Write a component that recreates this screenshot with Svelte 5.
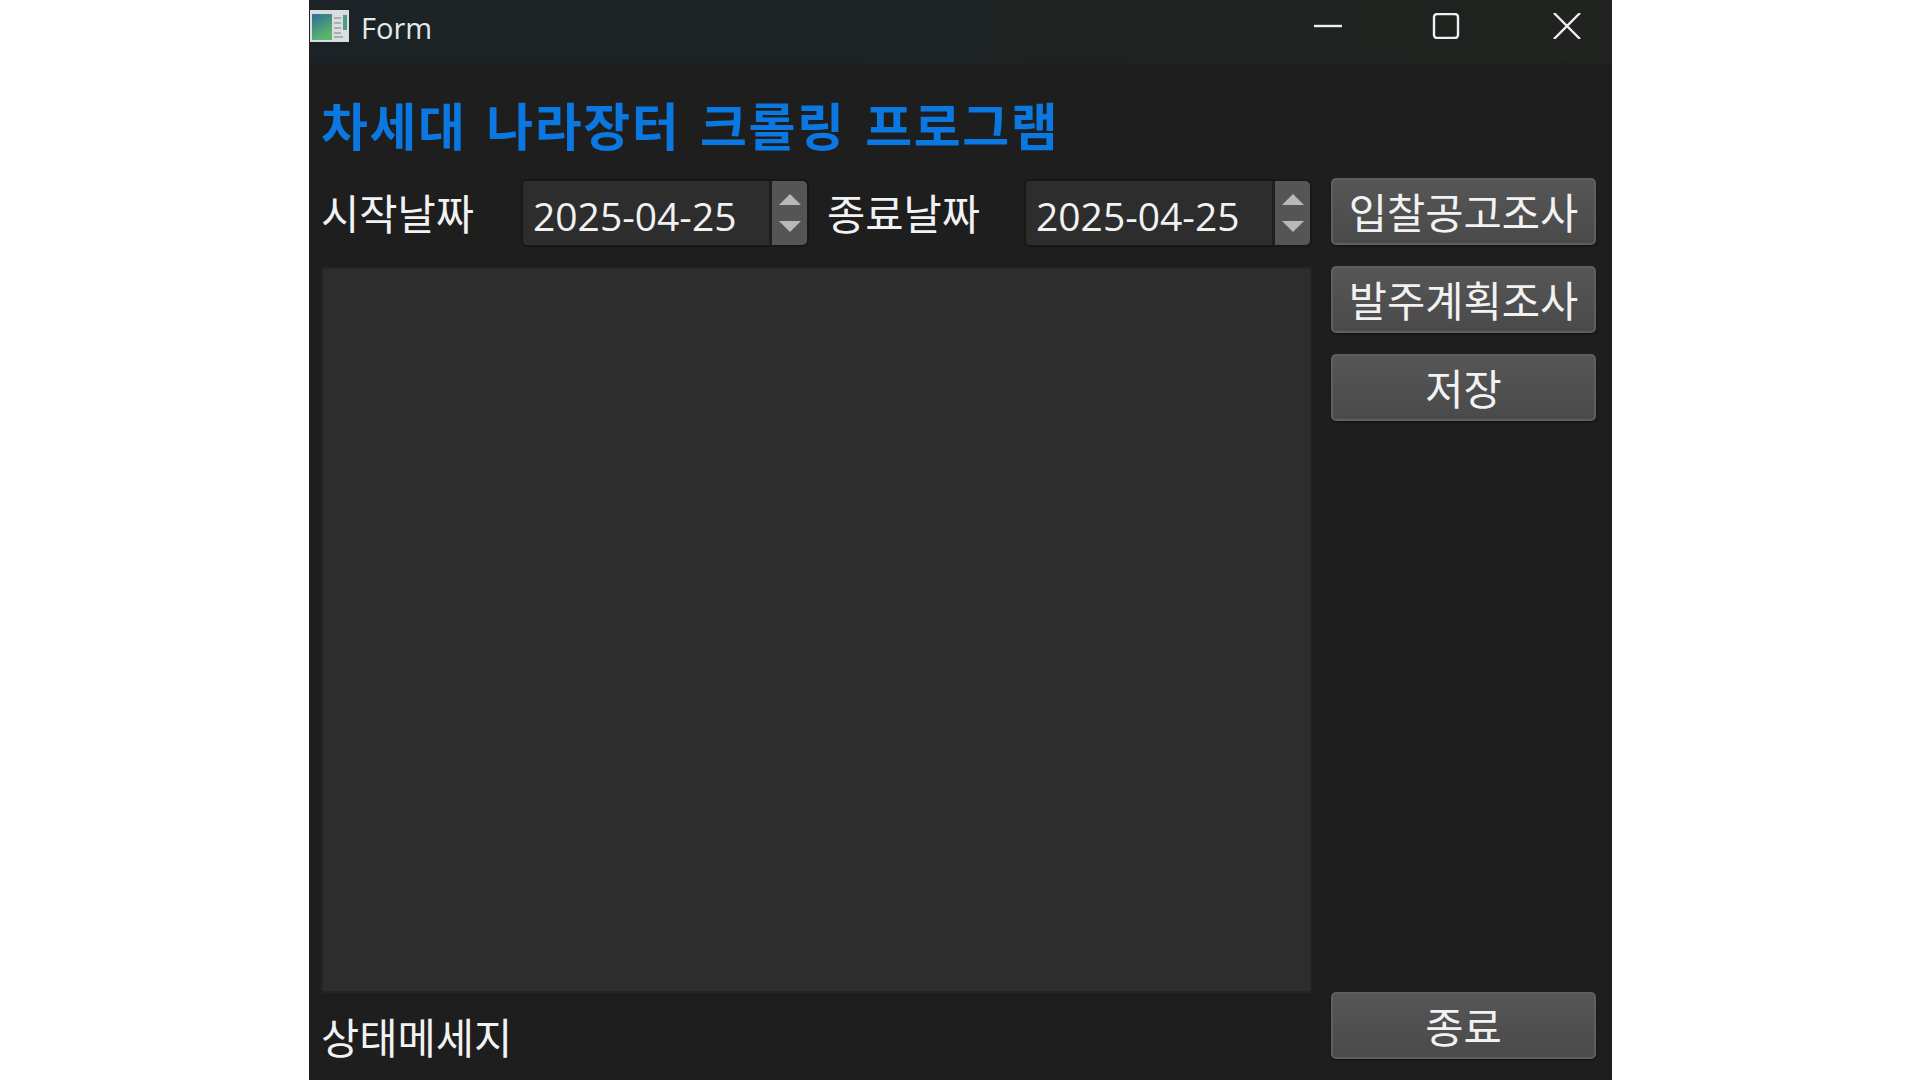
<script>
  const actions = ['입찰공고조사', '발주계획조사', '저장'];
  const dates = [
    { label: '시작날짜', value: '2025-04-25' },
    { label: '종료날짜', value: '2025-04-25' }
  ];
</script>

<div class="page">
  <div class="window">
    <header class="titlebar">
      <svg class="app-icon" viewBox="0 0 39 32" aria-hidden="true">
        <defs>
          <linearGradient id="pane" x1="0" y1="0" x2="0.4" y2="1">
            <stop offset="0" stop-color="#2f6f96" />
            <stop offset="1" stop-color="#5cb56c" />
          </linearGradient>
        </defs>
        <rect width="39" height="32" fill="#d9dedd" />
        <rect x="2" y="4" width="20" height="26" fill="url(#pane)" />
        <rect x="33" y="5" width="4" height="15" fill="#4f9a86" />
        <path d="M24 8h7M24 13h7M24 18h7M24 23h7M24 27h9" stroke="#98a1a0" stroke-width="1.5" />
      </svg>
      <span class="title">Form</span>
      <div class="controls">
        <svg class="ctl" viewBox="0 0 28 26" aria-hidden="true"><path d="M0 13H28" /></svg>
        <svg class="ctl" viewBox="0 0 28 26" aria-hidden="true"><rect x="2" y="1" width="24" height="24" rx="3" /></svg>
        <svg class="ctl" viewBox="0 0 28 26" aria-hidden="true"><path d="M1 0L27 26M27 0L1 26" /></svg>
      </div>
    </header>

    <main class="content">
      <h1>차세대 나라장터 크롤링 프로그램</h1>
      <div class="columns">
        <section class="left">
          <div class="date-row">
            {#each dates as d}
              <label class="date-field">
                <span class="date-label">{d.label}</span>
                <span class="date-edit">
                  <span class="date-value">{d.value}</span>
                  <span class="spin">
                    <i class="up"></i>
                    <i class="down"></i>
                  </span>
                </span>
              </label>
            {/each}
          </div>
          <div class="list"></div>
          <div class="status">상태메세지</div>
        </section>
        <aside class="right">
          {#each actions as a}
            <button type="button">{a}</button>
          {/each}
          <button type="button" class="exit">종료</button>
        </aside>
      </div>
    </main>
  </div>
</div>

<style>
  :global(body) {
    margin: 0;
    background: #fff;
  }
  .page {
    display: flex;
    justify-content: center;
    height: 1080px;
    overflow: hidden;
  }
  .window {
    width: 1303px;
    margin-left: 1px;
    display: flex;
    flex-direction: column;
    background: #1e1e1e;
    color: #f2f2f2;
    font-family: "Noto Sans CJK KR", "Noto Sans", sans-serif;
  }
  .titlebar {
    height: 63px;
    display: flex;
    align-items: center;
    padding-left: 1px;
    background: linear-gradient(90deg, #1b2326, #20231f);
  }
  .app-icon {
    width: 39px;
    height: 32px;
    margin-bottom: 12px;
  }
  .title {
    margin-left: 12px;
    margin-bottom: 8px;
    font: 29px "Open Sans", "Noto Sans", sans-serif;
    color: #e8e8e8;
  }
  .controls {
    margin-left: auto;
    display: flex;
    gap: 90px;
    padding-right: 31px;
    margin-bottom: 11px;
  }
  .ctl {
    width: 28px;
    height: 26px;
    fill: none;
    stroke: #f0f0f0;
    stroke-width: 2.4;
  }
  .ctl:last-child {
    margin-left: 3px;
  }
  .content {
    flex: 1;
    display: flex;
    flex-direction: column;
    padding: 0 15px 0 12px;
  }
  h1 {
    margin: 0;
    height: 115px;
    line-height: 122px;
    font-size: 51px;
    font-weight: 700;
    letter-spacing: 1.6px;
    word-spacing: 6.5px;
    color: #0a78e0;
    white-space: nowrap;
  }
  .columns {
    flex: 1;
    display: flex;
    gap: 19px;
  }
  .left {
    width: 991px;
    display: flex;
    flex-direction: column;
  }
  .date-row {
    display: flex;
    gap: 18px;
    margin-top: 1px;
    height: 68px;
  }
  .date-field {
    display: flex;
    align-items: center;
  }
  .date-label {
    width: 200px;
    font-size: 41.6px;
    line-height: 1;
    white-space: nowrap;
  }
  .date-field + .date-field .date-label {
    width: 197px;
  }
  .date-edit {
    width: 288px;
    height: 68px;
    box-sizing: border-box;
    display: flex;
    background: #2d2d2d;
    border: 2px solid #181818;
    border-radius: 6px;
  }
  .date-value {
    flex: 1;
    padding: 10px 0 0 10px;
    font: 39px "Open Sans", "Noto Sans", sans-serif;
    line-height: 50px;
  }
  .spin {
    width: 35px;
    display: flex;
    flex-direction: column;
    align-items: center;
    justify-content: center;
    gap: 16px;
    background: #555;
    border-left: 3px solid #1f1f1f;
    border-radius: 0 5px 5px 0;
  }
  .spin i {
    width: 0;
    height: 0;
    border-left: 11px solid transparent;
    border-right: 11px solid transparent;
  }
  .up {
    border-bottom: 11px solid #b9b9b9;
  }
  .down {
    border-top: 11px solid #b9b9b9;
  }
  .list {
    height: 726px;
    margin-top: 20px;
    background: #2d2d2d;
    border: 2px solid #242424;
    box-sizing: border-box;
  }
  .status {
    flex: 1;
    display: flex;
    align-items: center;
    padding-bottom: 2px;
    font-size: 41.6px;
  }
  .right {
    width: 265px;
    display: flex;
    flex-direction: column;
    gap: 21px;
    padding-bottom: 21px;
  }
  button {
    height: 67px;
    padding: 0;
    box-sizing: border-box;
    border: 2px solid #5f5f5f;
    border-radius: 5px;
    background: linear-gradient(#565656, #4a4a4a);
    box-shadow: 0 1px 2px #111;
    color: #f2f2f2;
    font-family: inherit;
    font-size: 41.6px;
    line-height: 1;
    white-space: nowrap;
  }
  .exit {
    margin-top: auto;
  }
</style>
